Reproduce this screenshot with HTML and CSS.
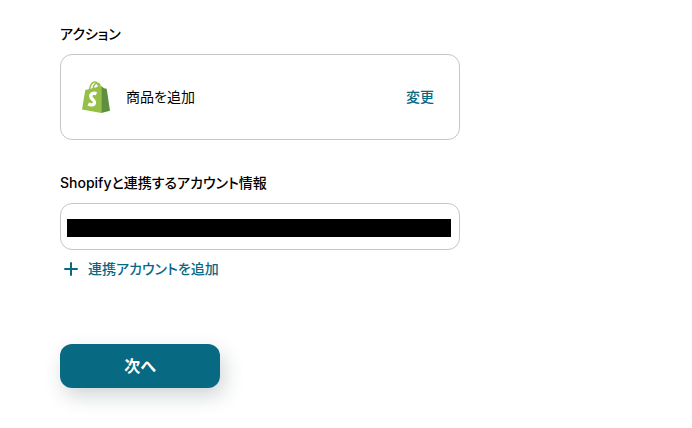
FILE: index.html
```html
<!DOCTYPE html>
<html lang="ja">
<head>
<meta charset="utf-8">
<meta name="viewport" content="width=device-width, initial-scale=1">
<title>アクション</title>
<link rel="stylesheet" href="styles.css">
</head>
<body>
<form class="setup">
  <section class="group">
    <h2 class="heading">アクション</h2>
    <div class="card">
      <svg class="logo" viewBox="0 0 28 32" aria-hidden="true">
        <path d="M7.500 8.500C8.300 3.800 10.600 1 13 1c2.500 0 3.500 2.600 3.500 6.500M11 8C11.500 4.500 13.500 2.200 15.300 2.200c2 0 2.900 2 3 4.800" fill="none" stroke="#95bf47" stroke-width="1.400"/>
        <path d="M3.300 9.100 19.300 5v27L0 28.500z" fill="#95bf47"/>
        <path d="M19.300 5 22 7.300l2.700.4L28 29.800 19.300 32z" fill="#5e8e3e"/>
        <path d="M14.500 12.600c-3-1-5.700-.1-5.700 2.600 0 3.100 3.700 3.300 3.700 6 0 2.900-3.400 3.400-6.200 1.800" fill="none" stroke="#fff" stroke-width="3.400"/>
      </svg>
      <span class="name">商品を追加</span>
      <button class="link" type="button">変更</button>
    </div>
  </section>
  <section class="group">
    <label class="heading" for="account">Shopifyと連携するアカウント情報</label>
    <div class="field"><input class="account" id="account" type="text" readonly></div>
    <button class="link add" type="button">
      <svg class="plus" viewBox="0 0 14 14" aria-hidden="true"><path d="M7 1v12M1 7h12" fill="none" stroke="currentColor" stroke-width="2" stroke-linecap="round"/></svg>
      連携アカウントを追加
    </button>
  </section>
  <button class="next" type="submit">次へ</button>
</form>
</body>
</html>
```
FILE: styles.css
```css
* { box-sizing: border-box; }

body {
  margin: 0;
  background: #fff;
  color: #000;
  font: 14px/20px Inter, "Noto Sans CJK JP", sans-serif;
  font-feature-settings: "palt";
}

button, input { font: inherit; font-feature-settings: inherit; }

.setup {
  max-width: 520px;
  padding: 24px 60px 40px;
}

.group { margin-bottom: 33px; }

.heading {
  display: block;
  margin: 0 0 10px;
  font-size: 14px;
  font-weight: 500;
}

.card {
  display: flex;
  align-items: center;
  gap: 16px;
  padding: 26px 25px 26px 21px;
  border: 1px solid #c4c7c8;
  border-radius: 12px;
}

.logo { width: 28px; height: 32px; }

.name { flex: 1; }

.link {
  padding: 0;
  border: 0;
  background: none;
  color: #086983;
  font-weight: 500;
  cursor: pointer;
}

.field {
  display: flex;
  padding: 15px 8px 12px 6px;
  border: 1px solid #c4c7c8;
  border-radius: 12px;
}

.account {
  flex: 1;
  min-width: 0;
  height: 18px;
  padding: 0;
  border: 0;
  background: #000;
  color: #000;
}

.add {
  display: flex;
  align-items: center;
  gap: 10px;
  margin-top: 9px;
  padding-left: 4px;
}

.plus { width: 14px; height: 14px; }

.next {
  width: 160px;
  height: 44px;
  margin-top: 32px;
  border: 0;
  border-radius: 12px;
  background: #086983;
  box-shadow: 4px 8px 20px rgba(20, 40, 50, 0.2);
  color: #fff;
  font-size: 16px;
  font-weight: 700;
  cursor: pointer;
}
```
